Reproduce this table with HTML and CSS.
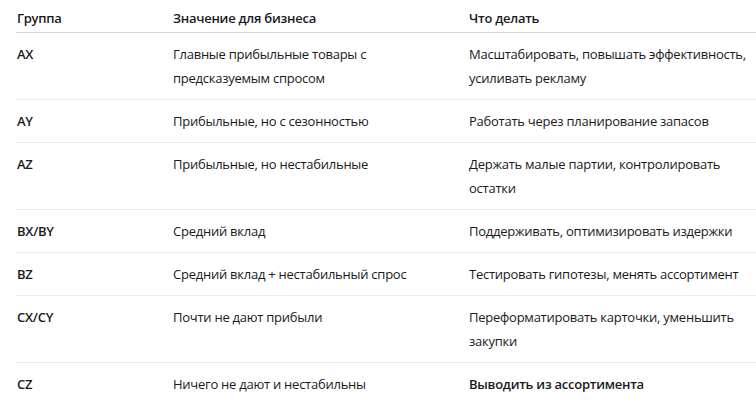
FILE: index.html
```html
<!DOCTYPE html>
<html lang="ru">
<head>
<meta charset="utf-8">
<link rel="stylesheet" href="styles.css">
</head>
<body>
<table class="abc">
  <colgroup>
    <col class="c1"><col class="c2"><col class="c3">
  </colgroup>
  <thead>
    <tr><th>Группа</th><th>Значение для бизнеса</th><th>Что делать</th></tr>
  </thead>
  <tbody>
    <tr><td class="g">AX</td><td>Главные прибыльные товары с<br>предсказуемым спросом</td><td>Масштабировать, повышать эффективность,<br>усиливать рекламу</td></tr>
    <tr><td class="g">AY</td><td>Прибыльные, но с сезонностью</td><td>Работать через планирование запасов</td></tr>
    <tr><td class="g">AZ</td><td>Прибыльные, но нестабильные</td><td>Держать малые партии, контролировать<br>остатки</td></tr>
    <tr><td class="g">BX/BY</td><td>Средний вклад</td><td>Поддерживать, оптимизировать издержки</td></tr>
    <tr><td class="g">BZ</td><td>Средний вклад + нестабильный спрос</td><td>Тестировать гипотезы, менять ассортимент</td></tr>
    <tr><td class="g">CX/CY</td><td>Почти не дают прибыли</td><td>Переформатировать карточки, уменьшить<br>закупки</td></tr>
    <tr class="last"><td class="g">CZ</td><td>Ничего не дают и нестабильны</td><td class="strong">Выводить из ассортимента</td></tr>
  </tbody>
</table>
</body>
</html>
```

FILE: styles.css
```css
html, body {
  margin: 0;
  padding: 0;
  background: #ffffff;
}
body {
  padding-left: 16px;
  font-family: "Open Sans", "Noto Sans", sans-serif;
  font-size: 13px;
  letter-spacing: -0.25px;
  color: #1a1a1a;
}
.abc {
  border-collapse: collapse;
  table-layout: fixed;
  width: 740px;
}
.c1 { width: 156px; }
.c2 { width: 296px; }
.c3 { width: auto; }
.abc th, .abc td {
  text-align: left;
  vertical-align: top;
  padding: 9px 0 9px 1px;
  line-height: 24px;
}
.abc th {
  font-weight: 600;
  padding-top: 6px;
  padding-bottom: 2px;
  border-bottom: 1px solid #d6d6d6;
}
.abc td {
  font-weight: 400;
  border-bottom: 1px solid #ededed;
}
.abc tr.last td {
  border-bottom: none;
}
.abc td.g, .abc td.strong {
  font-weight: 600;
}
```
